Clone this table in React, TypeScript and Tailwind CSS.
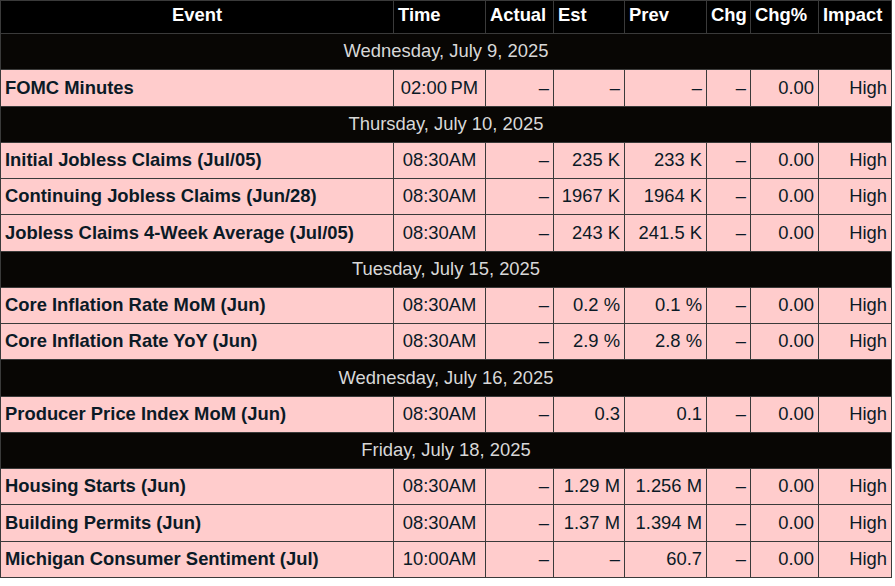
const columns = [
  { label: 'Event', width: 'w-[393px]', center: true },
  { label: 'Time', width: 'w-[92px]' },
  { label: 'Actual', width: 'w-[68px]' },
  { label: 'Est', width: 'w-[71px]' },
  { label: 'Prev', width: 'w-[82px]' },
  { label: 'Chg', width: 'w-[44px]' },
  { label: 'Chg%', width: 'w-[68px]' },
  { label: 'Impact', width: 'w-[73px]' },
];

type Row = { event: string; time: string; actual: string; est: string; prev: string };

const groups: { date: string; rows: Row[] }[] = [
  {
    date: 'Wednesday, July 9, 2025',
    rows: [{ event: 'FOMC Minutes', time: '02:00\u2009PM', actual: '–', est: '–', prev: '–' }],
  },
  {
    date: 'Thursday, July 10, 2025',
    rows: [
      { event: 'Initial Jobless Claims (Jul/05)', time: '08:30AM', actual: '–', est: '235 K', prev: '233 K' },
      { event: 'Continuing Jobless Claims (Jun/28)', time: '08:30AM', actual: '–', est: '1967 K', prev: '1964 K' },
      { event: 'Jobless Claims 4-Week Average (Jul/05)', time: '08:30AM', actual: '–', est: '243 K', prev: '241.5 K' },
    ],
  },
  {
    date: 'Tuesday, July 15, 2025',
    rows: [
      { event: 'Core Inflation Rate MoM (Jun)', time: '08:30AM', actual: '–', est: '0.2 %', prev: '0.1 %' },
      { event: 'Core Inflation Rate YoY (Jun)', time: '08:30AM', actual: '–', est: '2.9 %', prev: '2.8 %' },
    ],
  },
  {
    date: 'Wednesday, July 16, 2025',
    rows: [{ event: 'Producer Price Index MoM (Jun)', time: '08:30AM', actual: '–', est: '0.3', prev: '0.1' }],
  },
  {
    date: 'Friday, July 18, 2025',
    rows: [
      { event: 'Housing Starts (Jun)', time: '08:30AM', actual: '–', est: '1.29 M', prev: '1.256 M' },
      { event: 'Building Permits (Jun)', time: '08:30AM', actual: '–', est: '1.37 M', prev: '1.394 M' },
      { event: 'Michigan Consumer Sentiment (Jul)', time: '10:00AM', actual: '–', est: '–', prev: '60.7' },
    ],
  },
];

const cell = 'border border-[#3a3a3a] px-[4px] text-right';

export default function App() {
  return (
    <div className="min-h-screen bg-white font-['Liberation_Sans',Arial,sans-serif]">
      <table className="border-collapse table-fixed w-[892px] text-[18.4px] leading-none">
        <thead>
          <tr className="h-[33px] bg-black text-white font-bold">
            {columns.map((c) => (
              <th
                key={c.label}
                className={`${c.width} border border-[#3a3a3a] px-[4px] pb-[3px] ${c.center ? 'text-center' : 'text-left'}`}
              >
                {c.label}
              </th>
            ))}
          </tr>
        </thead>
        <tbody>
          {groups.map((g) => (
            <>
              <tr key={g.date} className="h-[36.25px] bg-[#080604]">
                <td colSpan={8} className="border border-[#3a3a3a] text-center text-[#d8d8d8]">
                  {g.date}
                </td>
              </tr>
              {g.rows.map((r) => (
                <tr key={r.event} className="h-[36.25px] bg-[#ffcccc] text-[#0b1a26]">
                  <td className="border border-[#3a3a3a] px-[4px] text-left font-bold">{r.event}</td>
                  <td className="border border-[#3a3a3a] px-[4px] text-center">{r.time}</td>
                  <td className={cell}>{r.actual}</td>
                  <td className={cell}>{r.est}</td>
                  <td className={cell}>{r.prev}</td>
                  <td className={cell}>–</td>
                  <td className={cell}>0.00</td>
                  <td className={cell}>High</td>
                </tr>
              ))}
            </>
          ))}
        </tbody>
      </table>
    </div>
  );
}
